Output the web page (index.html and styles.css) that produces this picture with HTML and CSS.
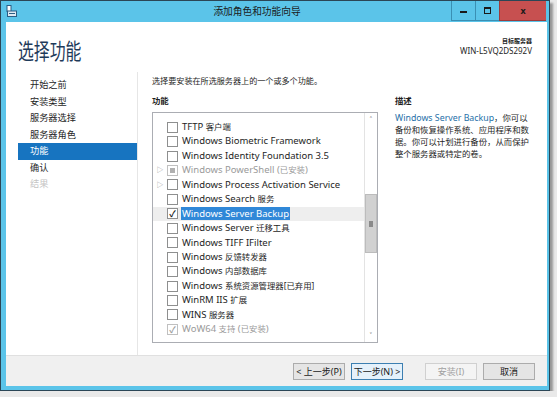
FILE: index.html
```html
<!DOCTYPE html>
<html lang="zh-CN">
<head>
    <meta charset="UTF-8">
    <title>添加角色和功能向导</title>
    <link rel="stylesheet" href="styles.css">
</head>
<body>
    <div class="window">
        <div class="titlebar">
            <svg class="app-icon" width="11" height="12" viewBox="0 0 11 12">
                <rect x="1" y="0.5" width="4" height="6" fill="#fff" stroke="#2a5d84"/>
                <rect x="1.5" y="6" width="9" height="5.5" fill="#dfe9f2" stroke="#2a5d84"/>
                <rect x="3" y="8" width="6" height="1" fill="#2a5d84"/>
            </svg>
            <div class="title">添加角色和功能向导</div>
            <div class="controls">
                <div class="ctl"><span class="min-glyph"></span></div>
                <div class="ctl"><span class="max-glyph"></span></div>
                <div class="ctl close">x</div>
            </div>
        </div>

        <div class="client">
            <div class="header">
                <h1>选择功能</h1>
                <div class="target">
                    <div class="target-label">目标服务器</div>
                    <div>WIN-L5VQ2DS292V</div>
                </div>
            </div>

            <div class="body">
                <ul class="nav">
                    <li>开始之前</li>
                    <li>安装类型</li>
                    <li>服务器选择</li>
                    <li>服务器角色</li>
                    <li class="active">功能</li>
                    <li>确认</li>
                    <li class="disabled">结果</li>
                </ul>

                <div class="main">
                    <div class="intro">选择要安装在所选服务器上的一个或多个功能。</div>
                    <div class="columns">
                        <div class="features">
                            <div class="label">功能</div>
                            <div class="listbox">
                                <div class="rows">
                                    <div class="row"><span class="exp"></span><span class="box"></span>TFTP&nbsp;<span class="zh">客户端</span></div>
                                    <div class="row"><span class="exp"></span><span class="box"></span>Windows Biometric Framework</div>
                                    <div class="row"><span class="exp"></span><span class="box"></span>Windows Identity Foundation 3.5</div>
                                    <div class="row installed"><span class="exp">&#9655;</span><span class="box partial"></span>Windows PowerShell (<span class="zh">已安装</span>)</div>
                                    <div class="row"><span class="exp">&#9655;</span><span class="box"></span>Windows Process Activation Service</div>
                                    <div class="row"><span class="exp"></span><span class="box"></span>Windows Search&nbsp;<span class="zh">服务</span></div>
                                    <div class="row current"><span class="exp"></span><span class="box checked">&#10003;</span><span class="sel">Windows Server Backup</span></div>
                                    <div class="row"><span class="exp"></span><span class="box"></span>Windows Server&nbsp;<span class="zh">迁移工具</span></div>
                                    <div class="row"><span class="exp"></span><span class="box"></span>Windows TIFF IFilter</div>
                                    <div class="row"><span class="exp"></span><span class="box"></span>Windows&nbsp;<span class="zh">反馈转发器</span></div>
                                    <div class="row"><span class="exp"></span><span class="box"></span>Windows&nbsp;<span class="zh">内部数据库</span></div>
                                    <div class="row"><span class="exp"></span><span class="box"></span>Windows&nbsp;<span class="zh">系统资源管理器[已弃用]</span></div>
                                    <div class="row"><span class="exp"></span><span class="box"></span>WinRM IIS&nbsp;<span class="zh">扩展</span></div>
                                    <div class="row"><span class="exp"></span><span class="box"></span>WINS&nbsp;<span class="zh">服务器</span></div>
                                    <div class="row installed"><span class="exp"></span><span class="box checked">&#10003;</span>WoW64&nbsp;<span class="zh">支持</span>&nbsp;(<span class="zh">已安装</span>)</div>
                                </div>
                                <div class="scrollbar">
                                    <div class="arrow">&#708;</div>
                                    <div class="track">
                                        <div class="thumb"><span class="grip"></span></div>
                                    </div>
                                    <div class="arrow">&#709;</div>
                                </div>
                            </div>
                        </div>

                        <div class="desc">
                            <div class="label">描述</div>
                            <p><span class="link">Windows Server Backup</span>，你可以<br>备份和恢复操作系统、应用程序和数<br>据。你可以计划进行备份，从而保护<br>整个服务器或特定的卷。</p>
                        </div>
                    </div>
                </div>
            </div>
        </div>

        <div class="footer">
            <button class="btn">&lt; 上一步(P)</button>
            <button class="btn default">下一步(N) &gt;</button>
            <button class="btn" disabled>安装(I)</button>
            <button class="btn">取消</button>
        </div>
    </div>
</body>
</html>
```

FILE: styles.css
```css
/* wizard window */
body {
    margin: 0;
    padding: 0;
    background-color: #e9e9e9;
    font-family: "Noto Sans", "Noto Sans CJK SC", sans-serif;
    font-size: 9.5px;
    color: #1e1e1e;
}
.window {
    width: 548px;
    height: 389px;
    border: 1px solid #2b4656;
    background-color: #5bc4e9;
    display: flex;
    flex-direction: column;
    box-shadow: 3px 3px 2px rgba(0, 0, 0, 0.35);
}
.titlebar {
    height: 21px;
    display: flex;
    align-items: flex-start;
    padding-left: 5px;
}
.app-icon {
    margin-top: 4px;
}
.title {
    flex: 1;
    text-align: center;
    font-size: 9.7px;
    line-height: 21px;
    color: #1a1a1a;
    padding-left: 46px;
}
.controls {
    display: flex;
    margin-right: 3px;
}
.ctl {
    width: 23px;
    height: 19px;
    border: 1px solid #3a8fb3;
    border-top: none;
    border-right: none;
    display: flex;
    align-items: center;
    justify-content: center;
}
.min-glyph {
    width: 7px;
    height: 2px;
    background-color: #1a1a1a;
    margin-top: 3px;
}
.max-glyph {
    width: 5px;
    height: 4px;
    border: 1px solid #1a1a1a;
    border-top-width: 2px;
}
.ctl.close {
    width: 46px;
    background-color: #c75050;
    border-color: #9d3b3b;
    color: #1a1a1a;
    font-weight: bold;
    font-size: 9px;
    line-height: 18px;
}
.client {
    flex: 1;
    background-color: #fff;
    margin: 0 2px 0 5px;
    display: flex;
    flex-direction: column;
}
.header {
    height: 50px;
    display: flex;
    justify-content: space-between;
    padding: 0 15px 0 12px;
}
.header h1 {
    margin: 11px 0 0;
    font-size: 22px;
    font-weight: normal;
    color: #1e3a5a;
    transform: scaleX(0.72);
    transform-origin: left center;
    height: 28px;
}
.target {
    margin-top: 15px;
    text-align: right;
    font-size: 8px;
    line-height: 9px;
}
.target-label {
    font-weight: bold;
    font-size: 6px;
}
.body {
    flex: 1;
    display: flex;
}
.nav {
    list-style: none;
    margin: 0 0 0 12px;
    padding: 5px 0 0;
    width: 119px;
    border-right: 1px solid #e6e6e6;
    font-size: 9.2px;
}
.nav li {
    height: 16.5px;
    line-height: 16.5px;
    padding-left: 12px;
}
.nav li.active {
    background-color: #1774c0;
    color: #fff;
}
.nav li.disabled {
    color: #c4c4c4;
}
.main {
    flex: 1;
    padding-left: 14px;
}
.intro {
    margin-top: 3px;
    line-height: 12px;
    font-size: 8.1px;
}
.columns {
    display: flex;
    margin-top: 8px;
}
.label {
    font-weight: bold;
    line-height: 12px;
    margin-bottom: 5px;
    font-size: 8.4px;
}
.listbox {
    width: 224px;
    height: 229px;
    border: 1px solid #abadb3;
    display: flex;
}
.rows {
    flex: 1;
    padding-top: 7px;
    overflow: hidden;
}
.row {
    height: 14.45px;
    line-height: 14.45px;
    display: flex;
    align-items: center;
    white-space: nowrap;
}
.zh {
    font-size: 8.4px;
}
.row.installed {
    color: #9a9a9a;
}
.row.current {
    background-color: #eeeeee;
}
.exp {
    width: 14px;
    font-size: 7px;
    color: #a0a0a0;
    text-align: center;
}
.box {
    width: 9px;
    height: 9px;
    border: 1px solid #8e8f8f;
    background-color: #fff;
    margin-right: 4px;
    font-size: 9px;
    line-height: 9px;
    text-align: center;
    color: #1a1a1a;
    font-weight: bold;
}
.row.installed .box {
    border-color: #c0c0c0;
    color: #a0a0a0;
}
.box.partial {
    box-shadow: inset 0 0 0 2px #fff, inset 0 0 0 5px #b0b0b0;
}
.sel {
    background-color: #3088d8;
    color: #fff;
    padding: 0 1px;
    line-height: 13px;
    margin-left: -1px;
}
.scrollbar {
    width: 12px;
    border-left: 1px solid #e3e3e3;
    display: flex;
    flex-direction: column;
}
.arrow {
    height: 13px;
    font-size: 8px;
    line-height: 13px;
    text-align: center;
    color: #606060;
}
.track {
    flex: 1;
    padding-top: 68px;
}
.thumb {
    height: 57px;
    background-color: #d1d1d1;
    border: 1px solid #bcbcbc;
    display: flex;
    align-items: center;
    justify-content: center;
}
.grip {
    width: 4px;
    height: 6px;
    background-color: #8a8a8a;
}
.desc {
    width: 140px;
    margin-left: 17px;
}
.desc p {
    margin: 0;
    line-height: 12px;
    font-size: 8.4px;
    white-space: nowrap;
}
.link {
    color: #1e6fa8;
    font-size: 8.8px;
    line-height: 12px;
}
.footer {
    height: 30px;
    margin: 0 2px 4px 5px;
    background-color: #f0f0f0;
    border-top: 1px solid #e0e0e0;
    display: flex;
    align-items: center;
    justify-content: flex-end;
    padding-right: 12px;
}
.btn {
    font-family: inherit;
    font-size: 9px;
    height: 17px;
    width: 52px;
    padding: 0;
    margin-left: 6px;
    background-color: #e5e5e5;
    border: 1px solid #acacac;
    color: #1a1a1a;
}
.btn.default {
    border-color: #3c7fb1;
    background-color: #e5f1fb;
}
.btn:disabled {
    margin-left: 22px;
    background-color: #f4f4f4;
    border-color: #d0d0d0;
    color: #a0a0a0;
}
```
